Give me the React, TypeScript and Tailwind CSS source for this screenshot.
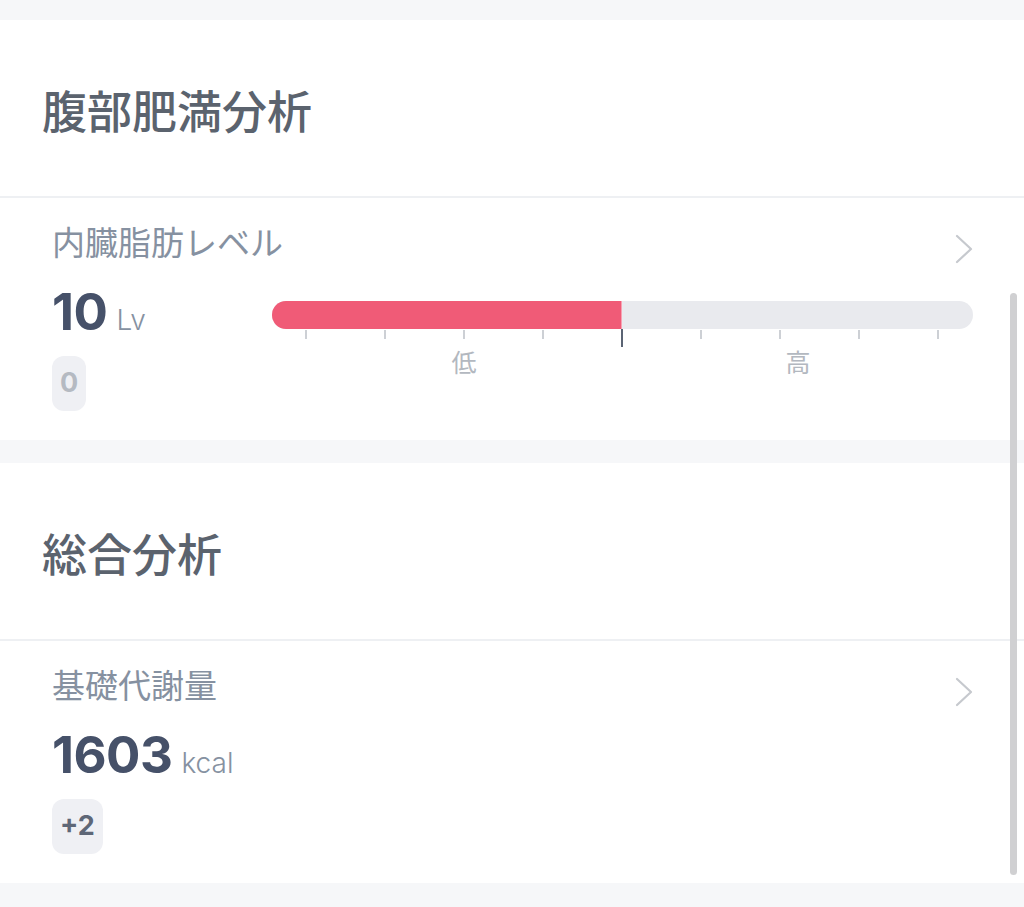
import React from "react";

const JP = "font-['Noto_Sans_CJK_JP','Noto_Sans',sans-serif]";
const NUM = "font-['Inter','Noto_Sans_CJK_JP',sans-serif]";

function Chevron() {
  return (
    <svg width="20" height="30" viewBox="0 0 20 30" fill="none" className="shrink-0">
      <polyline points="3,2 17,15 3,28" stroke="#c6c9ce" strokeWidth="2.2" strokeLinecap="round" strokeLinejoin="round" />
    </svg>
  );
}

const TICKS = [0, 1, 2, 3, 4, 5, 6, 7, 8];

function Gauge() {
  return (
    <div className="w-full">
      <div className="h-[28px] w-full rounded-full bg-[#e9eaee] overflow-hidden flex">
        <div className="h-full w-[350px] bg-[#f05b77] border-r border-[#f7a3b3]" />
      </div>
      <div className="relative h-[60px]">
        {TICKS.map((i) => (
          <div
            key={i}
            className={i === 4 ? "absolute top-0 w-[2px] h-[18px] bg-[#5b6474]" : "absolute top-[1px] w-[2px] h-[9px] bg-[#cdd0d5]"}
            style={{ left: 33 + i * 79 }}
          />
        ))}
        <div className={`absolute top-[20px] left-[179px] w-[26px] text-center text-[25px] leading-none text-[#b3b8c0] ${JP}`}>低</div>
        <div className={`absolute top-[20px] left-[513px] w-[26px] text-center text-[25px] leading-none text-[#b3b8c0] ${JP}`}>高</div>
      </div>
    </div>
  );
}

function Row({ label, value, unit, badge, badgeColor, gauge }: { label: string; value: string; unit: string; badge: string; badgeColor: string; gauge?: boolean }) {
  return (
    <div className="h-[242px] pl-[52px] pr-[51px] pt-[27px] flex flex-col">
      <div className="flex justify-between items-start">
        <div className={`text-[33px] leading-none text-[#8691a1] ${JP}`}>{label}</div>
        <div className="mt-[9px] -mr-[1px]"><Chevron /></div>
      </div>
      <div className="flex mt-[22px]">
        <div className="w-[220px] shrink-0 flex flex-col items-start">
          <div className="flex items-baseline gap-[9px]">
            <span className={`text-[51px] leading-none font-bold text-[#465169] tracking-[-0.5px] ${NUM}`}>{value}</span>
            <span className={`text-[28px] leading-none font-light text-[#8691a1] ${NUM}`}>{unit}</span>
          </div>
          <div className={`mt-[19px] h-[55px] px-[8px] rounded-[12px] bg-[#eff0f4] flex items-center text-[27px] font-bold ${NUM} ${badgeColor}`}>{badge}</div>
        </div>
        {gauge && <div className="flex-1 pt-[15px]"><Gauge /></div>}
      </div>
    </div>
  );
}

function Section({ title, children }: { title: string; children: React.ReactNode }) {
  return (
    <div className="bg-white">
      <div className={`h-[176px] flex items-center pl-[42px] pt-[4px] text-[45px] font-medium text-[#5b636e] ${JP}`}>{title}</div>
      <div className="h-[2px] bg-[#eef0f3]" />
      {children}
    </div>
  );
}

export default function App() {
  return (
    <div className="relative w-[1024px] h-[907px] overflow-hidden bg-[#f6f7f9]">
      <div className="h-[20px]" />
      <Section title="腹部肥満分析">
        <Row label="内臓脂肪レベル" value="10" unit="Lv" badge="0" badgeColor="text-[#b5bac2]" gauge />
      </Section>
      <div className="h-[23px]" />
      <Section title="総合分析">
        <Row label="基礎代謝量" value="1603" unit="kcal" badge="+2" badgeColor="text-[#5e6777]" />
      </Section>
      <div className="absolute left-[1010px] top-[293px] w-[7px] h-[582px] rounded-full bg-[#d0d0d2]" />
    </div>
  );
}
